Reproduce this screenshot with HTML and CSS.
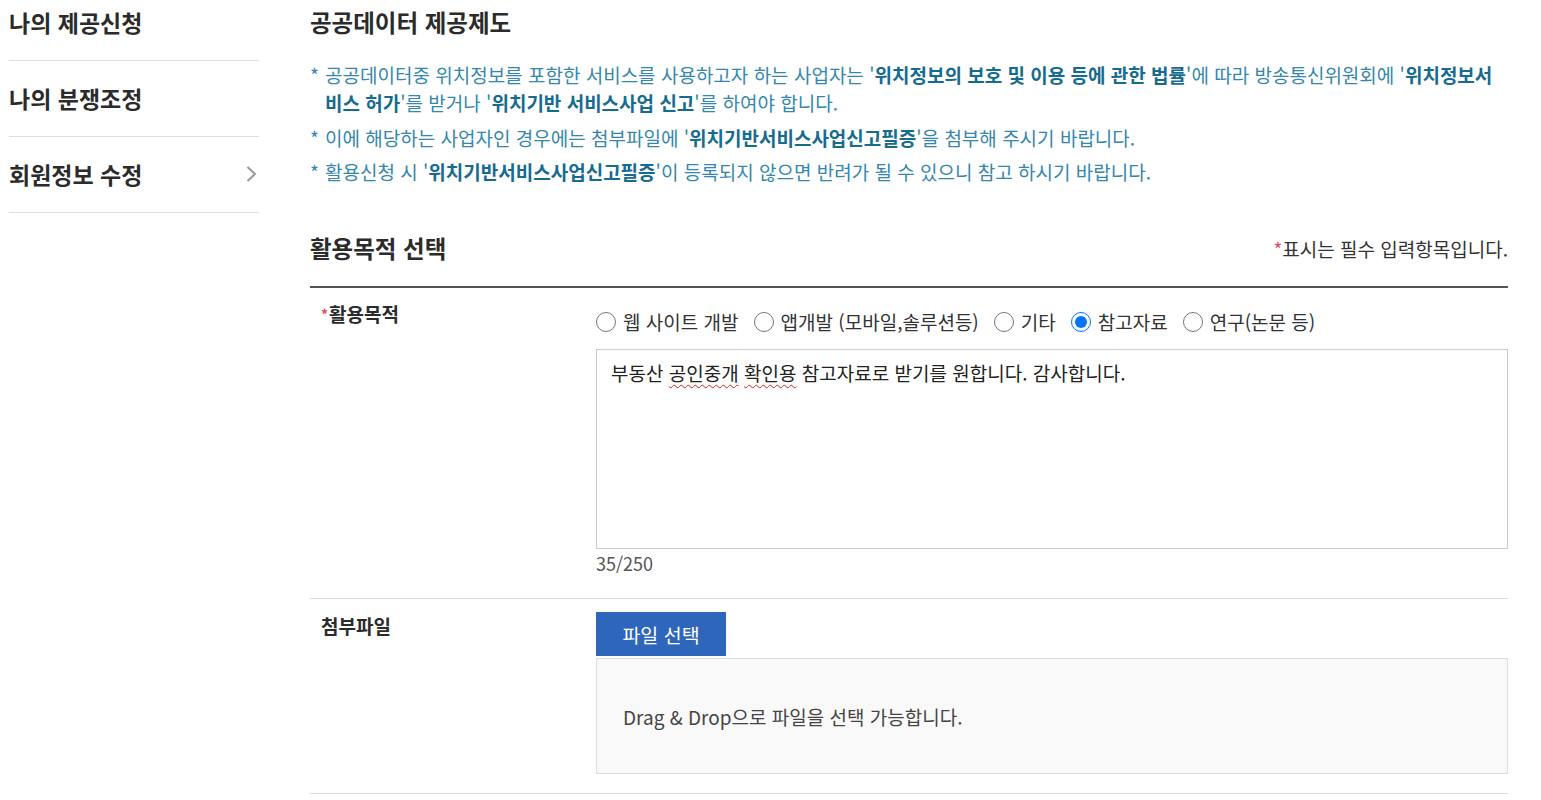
FILE: index.html
```html
<!DOCTYPE html>
<html lang="ko">
<head>
<meta charset="utf-8">
<title>공공데이터 제공제도</title>
<link rel="stylesheet" href="styles.css">
</head>
<body>
<div class="page">
  <nav class="side">
    <a class="side-item" href="#">나의 제공신청</a>
    <a class="side-item" href="#">나의 분쟁조정</a>
    <a class="side-item" href="#">회원정보 수정
      <svg class="chev" width="12" height="18" viewBox="0 0 12 18"><path d="M2.5 2 L10 9 L2.5 16" fill="none" stroke="#9a9a9a" stroke-width="2"/></svg>
    </a>
  </nav>
  <main class="main">
    <h2 class="title">공공데이터 제공제도</h2>
    <ul class="notice">
      <li><span class="star">*</span><span class="ntext">공공데이터중 위치정보를 포함한 서비스를 사용하고자 하는 사업자는 '<b>위치정보의 보호 및 이용 등에 관한 법률</b>'에 따라 방송통신위원회에 '<b>위치정보서비스 허가</b>'를 받거나 '<b>위치기반 서비스사업 신고</b>'를 하여야 합니다.</span></li>
      <li><span class="star">*</span><span class="ntext">이에 해당하는 사업자인 경우에는 첨부파일에 '<b>위치기반서비스사업신고필증</b>'을 첨부해 주시기 바랍니다.</span></li>
      <li><span class="star">*</span><span class="ntext">활용신청 시 '<b>위치기반서비스사업신고필증</b>'이 등록되지 않으면 반려가 될 수 있으니 참고 하시기 바랍니다.</span></li>
    </ul>
    <div class="sec-head">
      <h3 class="sec-title">활용목적 선택</h3>
      <p class="req"><span class="req-star">*</span>표시는 필수 입력항목입니다.</p>
    </div>
    <div class="form">
      <div class="row row-purpose">
        <div class="label"><span class="lstar">*</span>활용목적</div>
        <div class="field">
          <div class="radios">
            <label class="radio"><input type="radio" name="p">웹 사이트 개발</label>
            <label class="radio"><input type="radio" name="p">앱개발 (모바일,솔루션등)</label>
            <label class="radio"><input type="radio" name="p">기타</label>
            <label class="radio"><input type="radio" name="p" checked>참고자료</label>
            <label class="radio"><input type="radio" name="p">연구(논문 등)</label>
          </div>
          <div class="textbox">부동산 <span class="sp">공인중개</span> <span class="sp">확인용</span> 참고자료로 받기를 원합니다. 감사합니다.</div>
          <div class="count">35/250</div>
        </div>
      </div>
      <div class="row row-file">
        <div class="label">첨부파일</div>
        <div class="field">
          <button class="file-btn" type="button">파일 선택</button>
          <div class="drop">Drag &amp; Drop으로 파일을 선택 가능합니다.</div>
        </div>
      </div>
    </div>
  </main>
</div>
</body>
</html>
```

FILE: styles.css
```css
* { box-sizing: border-box; }
html, body { margin: 0; padding: 0; background: #fff; }
body {
  font-family: "Noto Sans CJK KR", "Noto Sans", sans-serif;
  color: #333;
  font-size: 19px;
  overflow: hidden;
}
.page {
  display: flex;
  padding-left: 9px;
}
.side {
  width: 250px;
  flex: none;
  display: flex;
  flex-direction: column;
  margin-top: -15px;
}
.side-item {
  height: 76px;
  border-bottom: 1px solid #dedede;
  display: flex;
  align-items: center;
  justify-content: space-between;
  font-size: 23px;
  font-weight: 700;
  color: #2b2b2b;
  text-decoration: none;
  padding-right: 2px;
  padding-bottom: 2px;
}
.chev { display: block; margin-top: 1px; }
.main {
  margin-left: 51px;
  width: 1198px;
  padding-top: 7px;
}
.title {
  margin: 0;
  font-size: 23.5px;
  line-height: 30px;
  font-weight: 700;
  color: #2b2b2b;
}
.notice {
  list-style: none;
  margin: 24px 0 0;
  padding: 0;
}
.notice li {
  display: flex;
  line-height: 28px;
  color: #3487ae;
  margin-bottom: 6.5px;
}
.notice .star {
  width: 15px;
  flex: none;
}
.notice b { color: #156b90; font-weight: 700; }
.sec-head {
  display: flex;
  justify-content: space-between;
  align-items: center;
  margin-top: 47px;
  margin-bottom: 23px;
}
.sec-title {
  margin: 0;
  font-size: 23.5px;
  line-height: 30px;
  font-weight: 700;
  color: #2b2b2b;
}
.req {
  margin: 0;
  line-height: 28px;
  color: #333;
  padding-top: 1px;
}
.req-star { color: #e0486a; }
.form {
  border-top: 2px solid #555;
}
.row {
  display: grid;
  grid-template-columns: 286px 1fr;
  border-bottom: 1px solid #dedede;
}
.label {
  padding-left: 11px;
  font-weight: 700;
  line-height: 28px;
  color: #2b2b2b;
}
.lstar {
  color: #e0486a;
  font-size: 14px;
  vertical-align: 2px;
  margin-right: 1px;
}
.row-purpose { padding: 12px 0 21px; }
.row-file { padding: 13px 0 19px; }
.radios {
  display: flex;
  align-items: center;
  margin-top: 8px;
  line-height: 28px;
}
.radio {
  display: flex;
  align-items: center;
  margin-right: 15px;
  color: #333;
}
.radio input {
  width: 20px;
  height: 20px;
  margin: 0 7px 0 0;
  accent-color: #0075ff;
}
.textbox {
  margin-top: 13px;
  height: 200px;
  border: 1px solid #cccccc;
  padding: 9px 14px;
  line-height: 28px;
  color: #222;
}
.sp {
  text-decoration: underline wavy #e02020;
  text-decoration-thickness: 1px;
  text-underline-offset: 3px;
}
.count {
  line-height: 28px;
  color: #555;
  font-size: 18px;
}
.file-btn {
  display: block;
  width: 130px;
  height: 44px;
  border: 0;
  background: #2d66bb;
  color: #fff;
  font-family: inherit;
  font-size: 19.5px;
  padding: 0;
}
.drop {
  margin-top: 2px;
  height: 116px;
  background: #f9f9f9;
  border: 1px solid #dddddd;
  display: flex;
  align-items: center;
  padding-left: 26px;
  color: #444;
}
```
